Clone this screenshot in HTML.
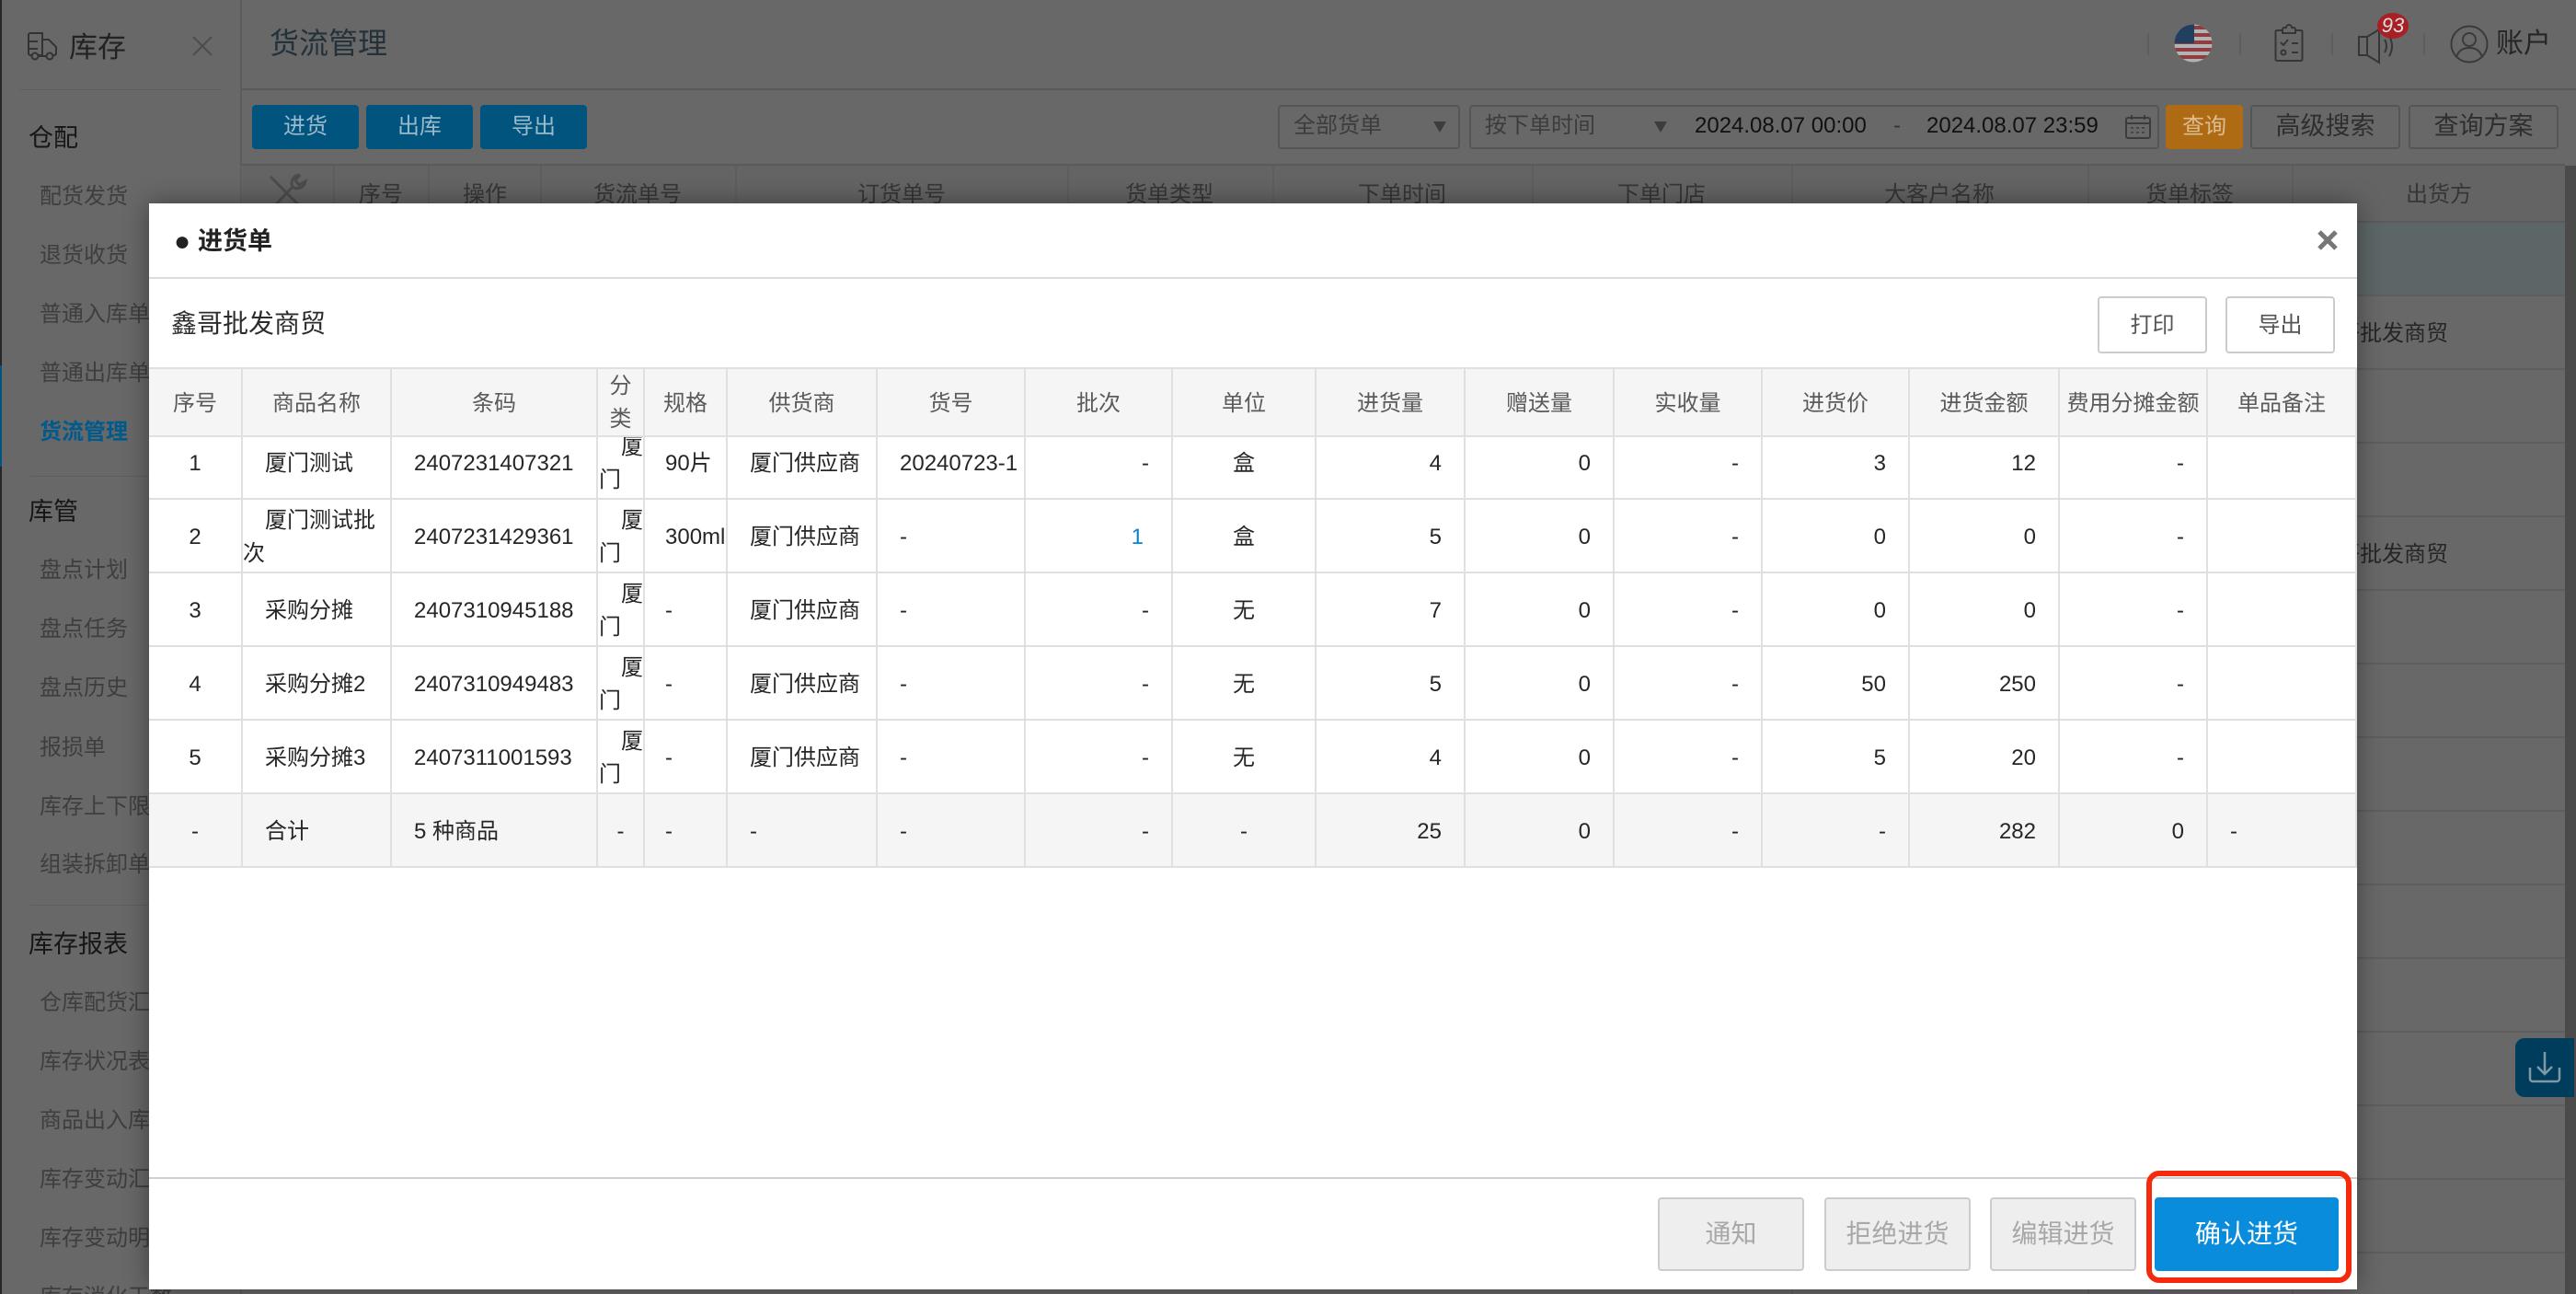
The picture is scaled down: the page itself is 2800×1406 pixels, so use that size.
<!DOCTYPE html>
<html lang="zh-CN"><head><meta charset="utf-8"><title>货流管理</title>
<style>
*{box-sizing:border-box}
html,body{margin:0;padding:0;width:2800px;height:1406px;overflow:hidden}
body{background:#686868;font-family:"Liberation Sans","Noto Sans CJK SC",sans-serif;color:#222}
#w{position:relative;width:2800px;height:1406px;overflow:hidden;background:#686868}
.a{position:absolute}
.t{position:absolute;white-space:nowrap;line-height:40px;height:40px;font-size:24px;margin-top:2px}
.i{color:#3e3e3e}
.h{color:#161616;font-size:27px}
.l{position:absolute;background:#5e5e5e}
.tb{position:absolute;top:114px;height:48px;width:116px;background:#00547e;border-radius:4px;color:#9dbacb;font-size:24px;line-height:48px;text-align:center}
.bx{position:absolute;top:114px;height:48px;border:2px solid #555;border-radius:4px}
.th{color:#363636;text-align:center;transform:translateX(-50%)}
.tri{position:absolute;width:0;height:0;border-left:7px solid transparent;border-right:7px solid transparent;border-top:12px solid #3c3c3c}
#m{position:absolute;left:162px;top:221px;width:2400px;height:1180px;background:#fff;box-shadow:0 0 26px rgba(0,0,0,.4)}
table{position:absolute;left:162px;top:399px;width:2400px;table-layout:fixed;border-collapse:separate;border-spacing:0;font-size:24px;color:#262626}
th,td{padding:0;border-right:2px solid #e0e0e0;border-bottom:2px solid #e0e0e0;text-align:center;white-space:nowrap;line-height:36px;font-weight:400}
thead th{height:76px;background:#f5f5f5;color:#5a5a5a;border-top:2px solid #e0e0e0;padding-top:4px}
thead th.v{padding-top:0}
thead th.v span{position:relative;top:1px;display:block}
tbody td{padding-top:3px}
tbody tr{height:80px}
tbody tr.f{height:68px}
tbody tr.f td{padding-top:0;padding-bottom:9px}
tbody tr.f td.c{padding:0}
tbody tr.s td{background:#f5f5f5}
td.n{text-align:left;text-indent:24px;white-space:normal}
td.g{text-align:left;padding-left:24px}
td.k{text-align:left;padding-left:22px}
td.r{text-align:right;padding-right:24px}
td.c{text-align:left;vertical-align:top;padding:0}
td.c div{height:78px;overflow:hidden;padding:5px 0 0 1px;white-space:nowrap}
td.c div span{display:inline-block;width:24px}
tr.f td.c div{height:66px;padding-top:0}
tr.f td.c div p{margin:-7px 0 0}
td.c div p{margin:0}
.btn{position:absolute;top:1301px;height:80px;width:159px;background:#eee;border:2px solid #ccc;border-radius:4px;color:#a8a8a8;font-size:28px;line-height:76px;text-align:center}
.wb{position:absolute;top:322px;height:62px;width:119px;background:#fff;border:2px solid #ccc;border-radius:4px;color:#555;font-size:24px;line-height:59px;text-align:center}
</style></head><body><div id="w">

<!-- sidebar -->
<div class="a" style="left:0;top:0;width:2px;height:1406px;background:#262626"></div>
<div class="a" style="left:0;top:397px;width:2px;height:110px;background:#00547e"></div>
<div class="a" style="left:261px;top:0;width:2px;height:1406px;background:#5c5c5c"></div>
<svg class="a" style="left:0;top:0" width="80" height="80" fill="none" stroke="#333" stroke-width="2">
<path d="M34 60h-1a2 2 0 0 1-2-2V38a2 2 0 0 1 2-2h13v24h-4M46 43h7l8 8v7a2 2 0 0 1-2 2h-1M42 61h8M31 45h10M31 53h10"/>
<circle cx="38" cy="61" r="3.5"/><circle cx="54" cy="61" r="3.5"/></svg>
<div class="t" style="left:75px;top:30px;font-size:31px;color:#222">库存</div>
<svg class="a" style="left:208px;top:38px" width="24" height="24" stroke="#4c4c4c" stroke-width="2"><path d="M2 2l20 20M22 2L2 22"/></svg>
<div class="l" style="left:22px;top:97px;width:218px;height:1px"></div>
<div class="t h" style="left:31px;top:128px">仓配</div>
<div class="t i" style="left:43px;top:192px">配货发货</div>
<div class="t i" style="left:43px;top:256px">退货收货</div>
<div class="t i" style="left:43px;top:320px">普通入库单</div>
<div class="t i" style="left:43px;top:384px">普通出库单</div>
<div class="t" style="left:43px;top:448px;color:#005a8c;font-weight:700">货流管理</div>
<div class="l" style="left:33px;top:517px;width:200px;height:1px"></div>
<div class="t h" style="left:31px;top:534px">库管</div>
<div class="t i" style="left:43px;top:598px">盘点计划</div>
<div class="t i" style="left:43px;top:662px">盘点任务</div>
<div class="t i" style="left:43px;top:726px">盘点历史</div>
<div class="t i" style="left:43px;top:791px">报损单</div>
<div class="t i" style="left:43px;top:855px">库存上下限</div>
<div class="t i" style="left:43px;top:918px">组装拆卸单</div>
<div class="l" style="left:33px;top:983px;width:200px;height:1px"></div>
<div class="t h" style="left:31px;top:1004px">库存报表</div>
<div class="t i" style="left:43px;top:1068px">仓库配货汇总</div>
<div class="t i" style="left:43px;top:1132px">库存状况表</div>
<div class="t i" style="left:43px;top:1196px">商品出入库汇总</div>
<div class="t i" style="left:43px;top:1260px">库存变动汇总</div>
<div class="t i" style="left:43px;top:1324px">库存变动明细</div>
<div class="t i" style="left:43px;top:1388px">库存消化天数</div>

<!-- top header -->
<div class="t" style="left:293px;top:25px;font-size:32px;color:#23313b">货流管理</div>
<div class="l" style="left:263px;top:96px;width:2537px;height:2px;background:#5a5a5a"></div>
<div class="l" style="left:2334px;top:36px;width:2px;height:24px"></div>
<div class="l" style="left:2434px;top:36px;width:2px;height:24px"></div>
<div class="l" style="left:2534px;top:36px;width:2px;height:24px"></div>
<div class="l" style="left:2634px;top:36px;width:2px;height:24px"></div>
<svg class="a" style="left:2360px;top:22px" width="50" height="50">
<defs><clipPath id="fc"><circle cx="24" cy="25" r="20.5"/></clipPath></defs>
<g clip-path="url(#fc)"><rect x="0" y="0" width="50" height="50" fill="#b3b3b3"/>
<path d="M0 6h50v4H0zM0 14h50v4H0zM0 22h50v4H0zM0 30h50v4H0zM0 38h50v4H0" fill="#8e3e40"/>
<rect x="0" y="0" width="25" height="25" fill="#1f4060"/></g></svg>
<svg class="a" style="left:2470px;top:24px" width="40" height="46" fill="none" stroke="#363636" stroke-width="2">
<path d="M11 9H5a1.500 1.500 0 0 0-1.500 1.500V40.500A1.500 1.500 0 0 0 5 42h26a1.500 1.500 0 0 0 1.500-1.500V10.500A1.500 1.500 0 0 0 31 9h-6"/>
<path d="M11 12V8a2 2 0 0 1 2-2h2a3 3 0 0 1 6 0h2a2 2 0 0 1 2 2v4z"/>
<path d="M9 22l3 3 5-6M21 23h7M21 33h7"/><circle cx="12" cy="33" r="2.500"/></svg>
<svg class="a" style="left:2560px;top:26px" width="50" height="46" fill="none" stroke="#363636" stroke-width="2">
<path d="M4 14h9v20H4zM13 14L26 6v36L13 34"/><path d="M32 17q4 7 0 14M37 13q6 11 0 22"/></svg>
<div class="a" style="left:2584px;top:14px;width:34px;height:28px;border-radius:50%;background:#a81f24;color:#ddd;font-size:22px;font-style:italic;line-height:28px;text-align:center">93</div>
<svg class="a" style="left:2660px;top:24px" width="48" height="48" fill="none" stroke="#3a3a3a" stroke-width="2">
<circle cx="24" cy="24" r="19.500"/><circle cx="24" cy="19" r="7"/><path d="M10 38q3-10 14-10t14 10"/></svg>
<div class="t" style="left:2713px;top:26px;font-size:30px;color:#262626">账户</div>

<!-- toolbar -->
<div class="tb" style="left:274px">进货</div>
<div class="tb" style="left:398px">出库</div>
<div class="tb" style="left:522px">导出</div>
<div class="bx" style="left:1389px;width:198px"></div>
<div class="t" style="left:1406px;top:115px;color:#3c3c3c">全部货单</div>
<div class="tri" style="left:1558px;top:132px"></div>
<div class="bx" style="left:1597px;width:750px"></div>
<div class="t" style="left:1614px;top:115px;color:#3c3c3c">按下单时间</div>
<div class="tri" style="left:1798px;top:132px"></div>
<div class="t" style="left:1842px;top:115px;color:#111">2024.08.07 00:00</div>
<div class="t" style="left:2058px;top:115px;color:#333">-</div>
<div class="t" style="left:2094px;top:115px;color:#111">2024.08.07 23:59</div>
<svg class="a" style="left:2308px;top:124px" width="32" height="28" fill="none" stroke="#3c3c3c" stroke-width="2">
<rect x="3" y="4" width="26" height="22" rx="2"/><path d="M3 10h26M9 1v5M23 1v5"/><path d="M8 15h3M14 15h3M20 15h3M8 20h3M14 20h3M20 20h3" stroke-width="1.500"/></svg>
<div class="tb" style="left:2354px;width:84px;background:#ae6b14;color:#dcbd92">查询</div>
<div class="bx" style="left:2446px;width:163px;color:#2e2e2e;font-size:27px;line-height:42px;text-align:center">高级搜索</div>
<div class="bx" style="left:2618px;width:163px;color:#2e2e2e;font-size:27px;line-height:42px;text-align:center">查询方案</div>

<!-- background table -->
<div class="l" style="left:263px;top:178px;width:2525px;height:2px;background:#5a5a5a"></div>
<div class="l" style="left:262px;top:180px;width:2526px;height:61px;background:#646464"></div>
<div class="a" style="left:263px;top:241px;width:2525px;height:80px;background:#5d6667"></div>
<div class="l" style="left:362px;top:180px;width:2px;height:60px"></div>
<div class="l" style="left:465px;top:180px;width:2px;height:60px"></div>
<div class="l" style="left:587px;top:180px;width:2px;height:60px"></div>
<div class="l" style="left:799px;top:180px;width:2px;height:60px"></div>
<div class="l" style="left:1160px;top:180px;width:2px;height:60px"></div>
<div class="l" style="left:1383px;top:180px;width:2px;height:60px"></div>
<div class="l" style="left:1665px;top:180px;width:2px;height:60px"></div>
<div class="l" style="left:1947px;top:180px;width:2px;height:60px"></div>
<div class="l" style="left:2269px;top:180px;width:2px;height:60px"></div>
<div class="l" style="left:2491px;top:180px;width:2px;height:60px"></div>
<svg class="a" style="left:288px;top:186px" width="50" height="36" fill="none" stroke="#4c4c4c" stroke-width="3"><path d="M6 6l30 30M38 4a9 9 0 0 0-8 13L12 36M38 4l-5 6 4 5 7-4a9 9 0 0 1-14 6"/></svg>
<div class="t th" style="left:414px;top:190px">序号</div>
<div class="t th" style="left:527px;top:190px">操作</div>
<div class="t th" style="left:693px;top:190px">货流单号</div>
<div class="t th" style="left:980px;top:190px">订货单号</div>
<div class="t th" style="left:1271px;top:190px">货单类型</div>
<div class="t th" style="left:1524px;top:190px">下单时间</div>
<div class="t th" style="left:1806px;top:190px">下单门店</div>
<div class="t th" style="left:2108px;top:190px">大客户名称</div>
<div class="t th" style="left:2380px;top:190px">货单标签</div>
<div class="t th" style="left:2651px;top:190px">出货方</div>
<div class="l" style="left:263px;top:240px;width:2525px;height:2px;background:#5a5a5a"></div>
<div class="l" style="left:263px;top:320px;width:2525px;height:2px"></div>
<div class="l" style="left:263px;top:400px;width:2525px;height:2px"></div>
<div class="l" style="left:263px;top:480px;width:2525px;height:2px"></div>
<div class="l" style="left:263px;top:560px;width:2525px;height:2px"></div>
<div class="l" style="left:263px;top:640px;width:2525px;height:2px"></div>
<div class="l" style="left:263px;top:720px;width:2525px;height:2px"></div>
<div class="l" style="left:263px;top:800px;width:2525px;height:2px"></div>
<div class="l" style="left:263px;top:880px;width:2525px;height:2px"></div>
<div class="l" style="left:263px;top:960px;width:2525px;height:2px"></div>
<div class="l" style="left:263px;top:1040px;width:2525px;height:2px"></div>
<div class="l" style="left:263px;top:1120px;width:2525px;height:2px"></div>
<div class="l" style="left:263px;top:1200px;width:2525px;height:2px"></div>
<div class="l" style="left:263px;top:1280px;width:2525px;height:2px"></div>
<div class="l" style="left:263px;top:1360px;width:2525px;height:2px"></div>
<div class="t" style="left:2517px;top:341px;color:#262626">鑫哥批发商贸</div>
<div class="t" style="left:2517px;top:581px;color:#262626">鑫哥批发商贸</div>
<div class="l" style="left:1947px;top:1400px;width:2px;height:6px"></div>
<div class="l" style="left:2269px;top:1400px;width:2px;height:6px"></div>
<div class="l" style="left:2491px;top:1400px;width:2px;height:6px"></div>
<div class="a" style="left:2788px;top:180px;width:12px;height:1226px;background:#4b4b4b"></div>
<div class="a" style="left:2734px;top:1128px;width:64px;height:64px;background:#003d5c;border-radius:10px 0 0 10px"></div>
<svg class="a" style="left:2745px;top:1140px" width="42" height="40" fill="none" stroke="#8098a6" stroke-width="2.500"><path d="M21 3v24M13 19l8 8 8-8M5 20v12a3 3 0 0 0 3 3h26a3 3 0 0 0 3-3V20"/></svg>

<!-- modal -->
<div id="m"></div>
<div class="t" style="left:189px;top:241px;font-size:30px;color:#222">●</div>
<div class="t" style="left:215px;top:240px;font-size:27px;font-weight:700;color:#222">进货单</div>
<svg class="a" style="left:2518px;top:249px" width="24" height="24" stroke="#777" stroke-width="5"><path d="M3 3l18 18M21 3L3 21"/></svg>
<div class="a" style="left:162px;top:301px;width:2400px;height:2px;background:#dcdcdc"></div>
<div class="t" style="left:186px;top:330px;font-size:28px;color:#2c2c2c">鑫哥批发商贸</div>
<div class="wb" style="left:2280px">打印</div>
<div class="wb" style="left:2419px">导出</div>

<table>
<colgroup><col style="width:102px"><col style="width:162px"><col style="width:224px"><col style="width:51px"><col style="width:90px"><col style="width:163px"><col style="width:161px"><col style="width:160px"><col style="width:156px"><col style="width:162px"><col style="width:162px"><col style="width:161px"><col style="width:160px"><col style="width:163px"><col style="width:161px"><col style="width:162px"></colgroup>
<thead><tr><th>序号</th><th>商品名称</th><th>条码</th><th class="v"><span>分<br>类</span></th><th>规格</th><th>供货商</th><th>货号</th><th>批次</th><th>单位</th><th>进货量</th><th>赠送量</th><th>实收量</th><th>进货价</th><th>进货金额</th><th>费用分摊金额</th><th>单品备注</th></tr></thead>
<tbody>
<tr class="f"><td>1</td><td class="n">厦门测试</td><td class="g">2407231407321</td><td class="c"><div><p><span></span>厦<br>门</p></div></td><td class="k">90片</td><td class="g">厦门供应商</td><td class="g">20240723-1</td><td class="r">-</td><td>盒</td><td class="r">4</td><td class="r">0</td><td class="r">-</td><td class="r">3</td><td class="r">12</td><td class="r">-</td><td></td></tr>
<tr><td>2</td><td class="n">厦门测试批次</td><td class="g">2407231429361</td><td class="c"><div><span></span>厦<br>门</div></td><td class="k">300ml</td><td class="g">厦门供应商</td><td class="g">-</td><td class="r" style="color:#0a84d0;padding-right:30px">1</td><td>盒</td><td class="r">5</td><td class="r">0</td><td class="r">-</td><td class="r">0</td><td class="r">0</td><td class="r">-</td><td></td></tr>
<tr><td>3</td><td class="n">采购分摊</td><td class="g">2407310945188</td><td class="c"><div><span></span>厦<br>门</div></td><td class="k">-</td><td class="g">厦门供应商</td><td class="g">-</td><td class="r">-</td><td>无</td><td class="r">7</td><td class="r">0</td><td class="r">-</td><td class="r">0</td><td class="r">0</td><td class="r">-</td><td></td></tr>
<tr><td>4</td><td class="n">采购分摊2</td><td class="g">2407310949483</td><td class="c"><div><span></span>厦<br>门</div></td><td class="k">-</td><td class="g">厦门供应商</td><td class="g">-</td><td class="r">-</td><td>无</td><td class="r">5</td><td class="r">0</td><td class="r">-</td><td class="r">50</td><td class="r">250</td><td class="r">-</td><td></td></tr>
<tr><td>5</td><td class="n">采购分摊3</td><td class="g">2407311001593</td><td class="c"><div><span></span>厦<br>门</div></td><td class="k">-</td><td class="g">厦门供应商</td><td class="g">-</td><td class="r">-</td><td>无</td><td class="r">4</td><td class="r">0</td><td class="r">-</td><td class="r">5</td><td class="r">20</td><td class="r">-</td><td></td></tr>
<tr class="s"><td>-</td><td class="n">合计</td><td class="g">5 种商品</td><td>-</td><td class="k">-</td><td class="g">-</td><td class="g">-</td><td class="r">-</td><td>-</td><td class="r">25</td><td class="r">0</td><td class="r">-</td><td class="r">-</td><td class="r">282</td><td class="r">0</td><td class="g">-</td></tr>
</tbody></table>

<div class="a" style="left:162px;top:1279px;width:2400px;height:2px;background:#d0d0d0"></div>
<div class="btn" style="left:1802px">通知</div>
<div class="btn" style="left:1983px">拒绝进货</div>
<div class="btn" style="left:2163px">编辑进货</div>
<div class="a" style="left:2342px;top:1301px;width:200px;height:80px;background:#0a8cdc;border-radius:4px;color:#fff;font-size:28px;line-height:80px;text-align:center">确认进货</div>
<div class="a" style="left:2333px;top:1272px;width:223px;height:122px;border:6px solid #f52a0c;border-radius:14px"></div>
</div></body></html>
